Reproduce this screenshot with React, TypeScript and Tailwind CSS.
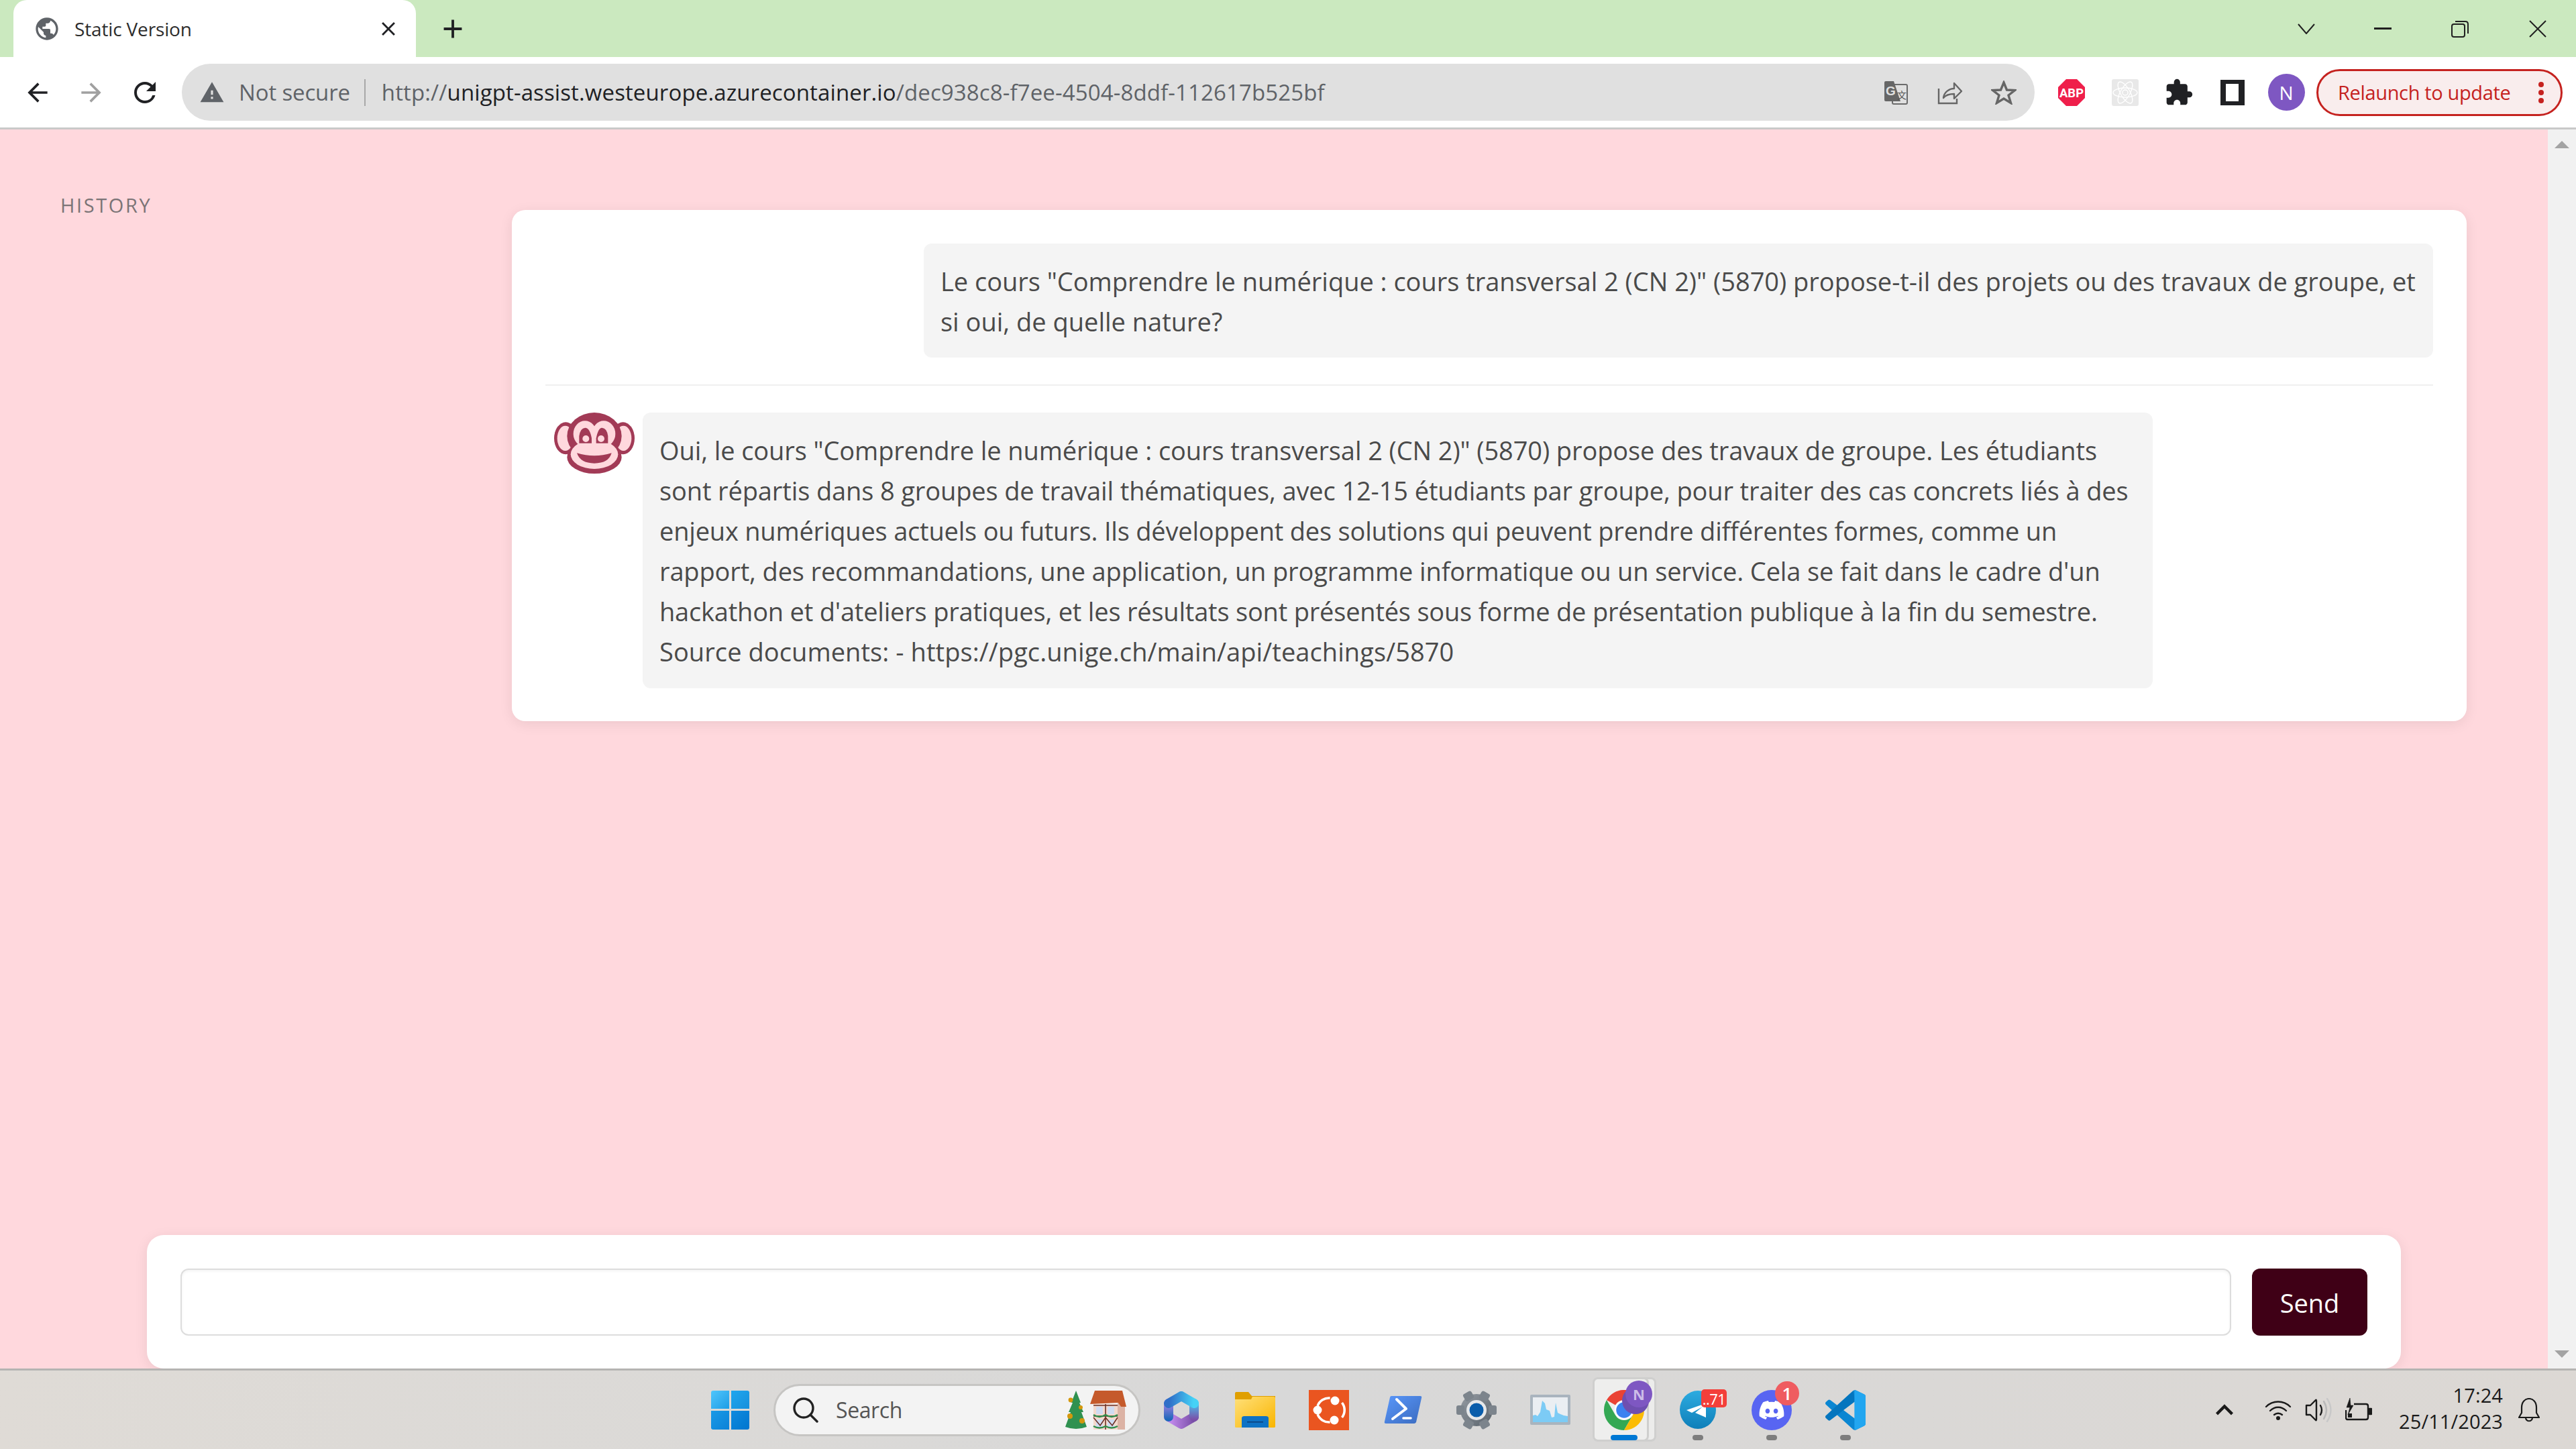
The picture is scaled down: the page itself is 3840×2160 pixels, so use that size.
import React from "react";
import { MdArrowBack, MdArrowForward, MdRefresh, MdWarning, MdPublic, MdExtension, MdClose, MdAdd, MdKeyboardArrowUp } from "react-icons/md";
import { FaDiscord } from "react-icons/fa";

const Monkey = () => (
  <svg viewBox="48 45 360 273" className="w-[120px] h-[91px] shrink-0 ml-[13px] mr-[12px]">
    <ellipse cx="100" cy="160" rx="52" ry="72" fill="#a23a56" />
    <ellipse cx="356" cy="160" rx="52" ry="72" fill="#a23a56" />
    <ellipse cx="98" cy="160" rx="36" ry="56" fill="#ffd8dd" />
    <ellipse cx="358" cy="160" rx="36" ry="56" fill="#ffd8dd" />
    <ellipse cx="228" cy="150" rx="122" ry="105" fill="#a23a56" />
    <ellipse cx="228" cy="245" rx="122" ry="73" fill="#a23a56" />
    <ellipse cx="186" cy="140" rx="52" ry="58" fill="#ffd8dd" />
    <ellipse cx="270" cy="140" rx="52" ry="58" fill="#ffd8dd" />
    <ellipse cx="228" cy="232" rx="106" ry="65" fill="#ffd8dd" />
    <path d="M160 182 V150 Q165 114 187 113 Q208 114 216 160 V182 Z" fill="#a23a56" />
    <path d="M236 182 V160 Q245 114 262 113 Q284 114 289 150 V182 Z" fill="#a23a56" />
    <circle cx="190" cy="162" r="15" fill="#ffd8dd" />
    <circle cx="258" cy="162" r="15" fill="#ffd8dd" />
    <path d="M150 226 Q228 250 305 226 Q292 272 228 272 Q165 272 150 226Z" fill="#a23a56" />
  </svg>
);

const Translate = () => (
  <svg viewBox="0 0 36 36" className="w-[36px] h-[36px]">
    <rect x="12" y="6" width="22" height="29" rx="2" fill="none" stroke="#6b6b6b" strokeWidth="2" />
    <path d="M2 1 H14 L24 31 H2 Q0 31 0 29 V3 Q0 1 2 1Z" fill="#666" />
    <text x="2" y="22" fontSize="19" fontWeight="700" fill="#e0e0e0" fontFamily="'Liberation Sans',sans-serif">G</text>
    <text x="19" y="27" fontSize="14" fill="#555" fontFamily="'Noto Sans CJK SC',sans-serif">文</text>
  </svg>
);

const Share = () => (
  <svg viewBox="0 0 38 36" className="w-[38px] h-[36px]" fill="none" stroke="#666" strokeWidth="2.4">
    <path d="M2 12 V34 H29 V27" />
    <path d="M9 26 C10 17 18 12 25 12 V4 L36 16 L25 27 V20 C18 20 13 21 9 26 Z" strokeLinejoin="round" />
  </svg>
);

const Star = () => (
  <svg viewBox="0 0 38 36" className="w-[38px] h-[36px]" fill="none" stroke="#666" strokeWidth="3.4" strokeLinejoin="miter">
    <path d="M19 3 L23.5 14 L35.5 14.5 L26 22 L29.5 33.5 L19 27 L8.5 33.5 L12 22 L2.5 14.5 L14.5 14 Z" />
  </svg>
);

const Abp = () => (
  <svg viewBox="0 0 40 40" className="w-[40px] h-[40px]">
    <polygon points="12,0 28,0 40,12 40,28 28,40 12,40 0,28 0,12" fill="#ef1f4b" />
    <text x="20" y="27" textAnchor="middle" fontSize="19" fontWeight="700" fill="#fff" fontFamily="'Roboto',sans-serif" textLength="36" lengthAdjust="spacingAndGlyphs">ABP</text>
  </svg>
);

const Atom = () => (
  <svg viewBox="0 0 40 40" className="w-[40px] h-[40px] rounded-[3px] bg-[#e8e8e8]" fill="none" stroke="#fff" strokeWidth="1.4">
    <ellipse cx="20" cy="20" rx="18" ry="7" />
    <ellipse cx="20" cy="20" rx="18" ry="7" transform="rotate(60 20 20)" />
    <ellipse cx="20" cy="20" rx="18" ry="7" transform="rotate(120 20 20)" />
    <circle cx="20" cy="20" r="4" />
  </svg>
);

const Folder = () => (
  <svg viewBox="0 0 60 54" className="w-[60px] h-[54px]">
    <defs>
      <linearGradient id="fo" x1="0" y1="0" x2="1" y2="1"><stop offset="0" stopColor="#ffe07a" /><stop offset="1" stopColor="#f9b500" /></linearGradient>
    </defs>
    <path d="M2 0 H20 L25 6 H60 V12 H0 V2 Q0 0 2 0Z" fill="#e09f00" />
    <path d="M0 11 L24 11 L26 7 H58 Q60 7 60 9 V52 Q60 53 58 53 H2 Q0 53 0 52Z" fill="url(#fo)" />
    <path d="M10 53 V39 Q10 36 14 36 H46 Q50 36 50 39 V53Z" fill="#0e72c4" />
    <rect x="18" y="44" width="24" height="1.5" fill="#0a3e78" />
  </svg>
);

const Ubuntu = () => (
  <svg viewBox="0 0 60 60" className="w-[60px] h-[60px]">
    <rect width="60" height="60" fill="#ea5520" />
    <g fill="none" stroke="#fff" strokeWidth="3.6">
      <path d="M13.1 23.8 A18 18 0 0 1 31.6 12.1" />
      <path d="M49.5 19 A18 18 0 0 1 49.5 41" />
      <path d="M31.6 47.9 A18 18 0 0 1 13.1 36.2" />
    </g>
    <circle cx="39" cy="16" r="6.5" fill="#fff" />
    <circle cx="13" cy="30" r="6.5" fill="#fff" />
    <circle cx="38" cy="45" r="6.5" fill="#fff" />
  </svg>
);

const PowerShell = () => (
  <svg viewBox="0 0 57 43" className="w-[57px] h-[43px]">
    <defs>
      <linearGradient id="ps" x1="0" y1="0" x2="1" y2="1"><stop offset="0" stopColor="#5a97fa" /><stop offset="1" stopColor="#3b6cc0" /></linearGradient>
    </defs>
    <path d="M11 1 H54 Q57 1 56 4 L48 40 Q47 42 45 42 H3 Q0 42 1 39 L9 3 Q9.5 1 11 1Z" fill="url(#ps)" />
    <path d="M19 6 L33 20 L13 35" fill="none" stroke="#fff" strokeWidth="4" strokeLinecap="round" strokeLinejoin="round" />
    <path d="M29 34 H40" stroke="#fff" strokeWidth="3.6" strokeLinecap="round" />
  </svg>
);

const Gear = () => (
  <svg viewBox="0 0 60 60" className="w-[60px] h-[60px]">
    <defs>
      <linearGradient id="ge" x1="0" y1="0" x2="1" y2="1"><stop offset="0" stopColor="#969ca3" /><stop offset="1" stopColor="#59626b" /></linearGradient>
    </defs>
    <g fill="url(#ge)">
      <circle cx="30" cy="30" r="24" />
    </g>
    <g fill="#7c848c">
      {[0, 60, 120, 180, 240, 300].map((a) => (
        <rect key={a} x="23" y="0" width="14" height="12" rx="3" transform={`rotate(${a + 30} 30 30)`} />
      ))}
    </g>
    <circle cx="30" cy="30" r="15" fill="#e6e8ea" />
    <circle cx="30" cy="30" r="10.5" fill="#0a5dab" />
  </svg>
);

const Monitor = () => (
  <svg viewBox="0 0 60 45" className="w-[60px] h-[45px]">
    <rect width="60" height="45" rx="2" fill="#a9b4be" />
    <rect x="4" y="4" width="52" height="37" fill="#eaeef2" />
    <path d="M4 31 L8 30 L11 32 L15 26 L18 9 L22 13 L24 22 L29 24 L32 34 L36 33 L38 12 L41 27 L45 29 L50 31 L56 32 V41 H4Z" fill="#7ccbf5" />
  </svg>
);

const Copilot = () => (
  <svg viewBox="0 0 52 56" className="w-[52px] h-[56px]" fill="none" strokeWidth="14" strokeLinecap="round" strokeLinejoin="round">
    <defs>
      <linearGradient id="c1" gradientUnits="userSpaceOnUse" x1="8" y1="16" x2="44" y2="18"><stop offset="0" stopColor="#2f6fc8" /><stop offset="1" stopColor="#45d2f6" /></linearGradient>
      <linearGradient id="c2" gradientUnits="userSpaceOnUse" x1="8" y1="44" x2="44" y2="44"><stop offset="0" stopColor="#c58cf0" /><stop offset="1" stopColor="#7a4fa8" /></linearGradient>
      <linearGradient id="c3" gradientUnits="userSpaceOnUse" x1="8" y1="14" x2="8" y2="42"><stop offset="0" stopColor="#b284e8" /><stop offset="1" stopColor="#1c68ba" /></linearGradient>
      <linearGradient id="c4" gradientUnits="userSpaceOnUse" x1="44" y1="14" x2="44" y2="42"><stop offset="0" stopColor="#45d2f6" /><stop offset="1" stopColor="#7a4fa8" /></linearGradient>
    </defs>
    <path d="M7 38 L26 49 L45 38" stroke="url(#c2)" />
    <path d="M45 18 V38" stroke="url(#c4)" />
    <path d="M7 18 V38" stroke="url(#c3)" />
    <path d="M7 18 L26 7 L45 18" stroke="url(#c1)" />
  </svg>
);

const Chrome = () => (
  <svg viewBox="0 0 48 48" className="w-[60px] h-[60px]">
    <path d="M3.2 12 A24 24 0 0 1 44.8 12 L24 12 A12 12 0 0 0 13.6 18 Z" fill="#ea4335" />
    <path d="M3.2 12 A24 24 0 0 0 24 48 L34.4 30 A12 12 0 0 1 13.6 30 Z" fill="#34a853" />
    <path d="M44.8 12 A24 24 0 0 1 24 48 L34.4 30 A12 12 0 0 0 34.4 18 L24 12 Z" fill="#fbbc04" />
    <circle cx="24" cy="24" r="11.5" fill="#fff" />
    <circle cx="24" cy="24" r="9.4" fill="#3b82f0" />
  </svg>
);

const Telegram = () => (
  <svg viewBox="0 0 54 57" className="w-[54px] h-[57px]">
    <defs>
      <linearGradient id="tg" x1="0" y1="0" x2="0" y2="1"><stop offset="0" stopColor="#2cabe0" /><stop offset="1" stopColor="#0f7fb9" /></linearGradient>
    </defs>
    <ellipse cx="27" cy="28.5" rx="27" ry="28.5" fill="url(#tg)" />
    <path d="M10 29 L39 19 L39 40 L23 33 L34 24 L18 33 Z" fill="#fff" />
  </svg>
);

const VSCode = () => (
  <svg viewBox="0 0 100 100" className="w-[60px] h-[60px]">
    <defs>
      <clipPath id="vsr"><rect x="72" y="0" width="28" height="100" /></clipPath>
    </defs>
    <path id="vsp" d="M96.5 10.8 75.9 0.9c-2.4-1.2-5.2-.7-7.1 1.2L29.4 38 12.2 25c-1.6-1.2-3.8-1.1-5.3.2l-5.5 5c-1.8 1.6-1.8 4.5 0 6.1L16.3 50 1.4 63.6c-1.8 1.6-1.8 4.5 0 6.1l5.5 5c1.5 1.3 3.7 1.4 5.3.2l17.2-13 39.4 35.9c1.9 1.9 4.7 2.4 7.1 1.2l20.6-9.9c2.2-1 3.5-3.2 3.5-5.6V16.4c0-2.4-1.3-4.6-3.5-5.6zM75 72.7 45.1 50 75 27.3v45.4z" fill="#0a86d2" />
    <path d="M29.4 62 12.2 75c-1.6 1.2-3.8 1.1-5.3-.2l-5.5-5c-1.8-1.6-1.8-4.5 0-6.1L16.3 50 29.4 38 68.8 2.1 75 27.3 45.1 50z" fill="#0068ad" opacity="0.55" />
    <g clipPath="url(#vsr)">
      <path d="M96.5 10.8 75.9 0.9 72 2 72 98 75.9 99.1 96.5 89.2c2.2-1 3.5-3.2 3.5-5.6V16.4c0-2.4-1.3-4.6-3.5-5.6z" fill="#22a6f0" />
    </g>
  </svg>
);

const Tree = () => (
  <svg viewBox="0 0 34 58" className="w-[34px] h-[58px]">
    <path d="M17 0 L24 18 L22 18 L28 32 L25 32 L33 54 Q17 60 1 54 L9 32 L6 32 L12 18 L10 18Z" fill="#2f9150" />
    <circle cx="9" cy="14" r="3.4" fill="#d4980c" />
    <circle cx="24" cy="25" r="3" fill="#d4980c" />
    <circle cx="8" cy="38" r="4" fill="#d4980c" />
    <circle cx="26" cy="45" r="4" fill="#d4980c" />
  </svg>
);

const House = () => (
  <svg viewBox="0 0 54 58" className="w-[54px] h-[58px]">
    <rect x="5" y="20" width="36" height="38" fill="#f3d9cd" />
    <path d="M41 12 L52 24 V58 H41Z" fill="#dcb3a5" />
    <path d="M7 0 H48 L54 24 H46 L42 18 L0 20Z" fill="#c55a2b" />
    <g fill="#cfdcf2"><rect x="9" y="24" width="10" height="11" /><rect x="26" y="24" width="10" height="11" /><rect x="9" y="43" width="10" height="11" /><rect x="26" y="43" width="10" height="11" /></g>
    <g stroke="#6b3027" strokeWidth="1.6" fill="none"><path d="M5 22 H41 M5 38 H41 M23 20 V58 M5 40 L15 52 L23 40 L33 52 L41 40" /></g>
    <g stroke="#2f8f4e" strokeWidth="2.4" fill="none"><path d="M5 36 Q14 42 23 36 Q32 42 41 36" /><path d="M5 53 Q14 58 23 53 Q32 58 41 53" /></g>
  </svg>
);

const Wifi = () => (
  <svg viewBox="0 0 40 32" className="w-[40px] h-[32px]" fill="none" stroke="#1a1a1a" strokeWidth="2.4" strokeLinecap="round">
    <path d="M2 11 C12 1 28 1 38 11" />
    <path d="M8 17 C15 10 25 10 32 17" />
    <path d="M14 23 C17.5 20 22.5 20 26 23" />
    <circle cx="20" cy="28" r="3" fill="#1a1a1a" stroke="none" />
  </svg>
);

const Speaker = () => (
  <svg viewBox="0 0 42 36" className="w-[42px] h-[36px]" fill="none" strokeWidth="2.4" strokeLinejoin="round" strokeLinecap="round">
    <path d="M2 11 H8 L16 3 Q17 2 17 5 V31 Q17 34 16 33 L8 25 H2Z" stroke="#1a1a1a" />
    <path d="M23 11 Q27 18 23 25" stroke="#1a1a1a" />
    <path d="M28 5 Q36 18 28 31" stroke="#b9b9b9" />
    <path d="M33 1 Q44 18 33 35" stroke="#c8c8c8" />
  </svg>
);

const Battery = () => (
  <svg viewBox="0 0 40 36" className="w-[40px] h-[36px]" fill="none" stroke="#1a1a1a" strokeWidth="2.4" strokeLinejoin="round">
    <path d="M13 9 H31 Q34 9 34 12 V29 Q34 32 31 32 H4 Q1 32 1 29 V18" />
    <rect x="36" y="16" width="3" height="8" fill="#1a1a1a" />
    <path d="M7 0 L2 14 H7 L4 25 L12 11 H8Z" fill="#1a1a1a" strokeWidth="0.6" />
    <rect x="4" y="23" width="6" height="6" fill="#1a1a1a" stroke="none" />
  </svg>
);

const Bell = () => (
  <svg viewBox="0 0 32 36" className="w-[32px] h-[36px]" fill="none" stroke="#1a1a1a" strokeWidth="2.2" strokeLinejoin="round">
    <path d="M5 14 C5 6 10 1 16 1 C22 1 27 6 27 14 V22 L31 29 H1 L5 22Z" />
    <path d="M11 29 C11 36 21 36 21 29" />
  </svg>
);

const Cell = ({ children, dot }: { children: React.ReactNode; dot?: boolean }) => (
  <div className="relative w-[110px] h-full shrink-0 flex items-center justify-center">
    {children}
    {dot && <div className="absolute bottom-[13px] left-[47px] w-[16px] h-[8px] rounded-full bg-[#7d7d7d]" />}
  </div>
);

const ToolCell = ({ children }: { children: React.ReactNode }) => (
  <div className="w-[80px] h-full shrink-0 flex items-center justify-center">{children}</div>
);

export default function App() {
  return (
    <div className="w-[3840px] h-[2160px] flex flex-col overflow-hidden bg-white font-['Open_Sans','Noto_Sans',sans-serif]">
      {/* tab strip */}
      <div className="h-[85px] shrink-0 bg-[#cbe9bf] flex items-stretch">
        <div className="ml-[20px] w-[600px] bg-white rounded-t-[20px] flex items-center pl-[30px] pr-[24px]">
          <MdPublic className="w-[40px] h-[40px] text-[#5f6368] shrink-0" />
          <span className="ml-[21px] text-[28px] text-[#2d2d2d] tracking-[-0.15px] flex-1">Static Version</span>
          <MdClose className="w-[34px] h-[34px] text-[#202124]" />
        </div>
        <div className="ml-[32px] flex items-center">
          <MdAdd className="w-[46px] h-[46px] text-[#202124]" />
        </div>
        <div className="ml-auto flex items-center text-[#1a1a1a]">
          <svg viewBox="0 0 26 16" className="w-[26px] h-[16px] mr-[88px]" fill="none" stroke="#202020" strokeWidth="2"><path d="M1 1 L13 15 L25 1" /></svg>
          <div className="w-[26px] h-[3px] bg-[#202020] mr-[89px]" />
          <svg viewBox="0 0 26 26" className="w-[26px] h-[26px] mr-[90px]" fill="none" stroke="#202020" strokeWidth="2"><rect x="1" y="6" width="19" height="19" rx="3" /><path d="M6 2 H21 Q25 2 25 6 V20" /></svg>
          <svg viewBox="0 0 26 26" className="w-[26px] h-[26px] mr-[44px]" fill="none" stroke="#202020" strokeWidth="2"><path d="M1 1 L25 25 M25 1 L1 25" /></svg>
        </div>
      </div>

      {/* toolbar */}
      <div className="h-[105px] shrink-0 bg-white flex items-center pl-[16px] pr-[18px]">
        <div className="flex h-[85px] items-center">
          <ToolCell><MdArrowBack className="w-[44px] h-[44px] text-[#202124]" /></ToolCell>
          <ToolCell><MdArrowForward className="w-[44px] h-[44px] text-[#a0a0a0]" /></ToolCell>
          <ToolCell><MdRefresh className="w-[48px] h-[48px] text-[#202124]" /></ToolCell>
        </div>
        <div className="ml-[15px] w-[2762px] h-[85px] rounded-full bg-[#e0e0e0] flex items-center pl-[26px] pr-[6px] shrink-0">
          <MdWarning className="w-[38px] h-[38px] text-[#5f6368] shrink-0" />
          <span className="ml-[21px] text-[33px] text-[#5f6368] whitespace-nowrap tracking-[-0.15px]">Not secure</span>
          <div className="ml-[21px] w-[2px] h-[40px] bg-[#a8a8a8]" />
          <span className="ml-[24px] text-[33px] text-[#5f6368] whitespace-nowrap tracking-[0.12px]">
            http://<span className="text-[#202124]">unigpt-assist.westeurope.azurecontainer.io</span>/dec938c8-f7ee-4504-8ddf-112617b525bf
          </span>
          <div className="ml-auto flex h-full">
            <ToolCell><Translate /></ToolCell>
            <ToolCell><Share /></ToolCell>
            <ToolCell><Star /></ToolCell>
          </div>
        </div>
        <div className="ml-[15px] flex h-[85px] items-center">
          <ToolCell><Abp /></ToolCell>
          <ToolCell><Atom /></ToolCell>
          <ToolCell><MdExtension className="w-[44px] h-[44px] text-[#202124]" /></ToolCell>
          <ToolCell><div className="w-[36px] h-[38px] border-[9px] border-[#202124] border-l-[8px] border-y-[6px]" /></ToolCell>
          <ToolCell>
            <div className="w-[55px] h-[55px] rounded-full bg-[#7e57c2] flex items-center justify-center text-white text-[28px]">N</div>
          </ToolCell>
        </div>
        <div className="ml-[5px] w-[367px] h-[70px] rounded-full border-[3px] border-[#c5221f] bg-[#f9eded] flex items-center pl-[29px] pr-[25px] text-[#c5221f] shrink-0">
          <span className="text-[29px] tracking-[-0.35px] whitespace-nowrap">Relaunch to update</span>
          <svg viewBox="0 0 8 32" className="ml-auto w-[8px] h-[32px]" fill="#c5221f"><circle cx="4" cy="4" r="4" /><circle cx="4" cy="16" r="4" /><circle cx="4" cy="28" r="4" /></svg>
        </div>
      </div>
      <div className="h-[3px] shrink-0 bg-[#c9c9c9]" />

      {/* browser content */}
      <div className="flex-1 flex min-h-0">
        <div className="flex-1 min-w-0 bg-[#ffd8dd] flex flex-col overflow-hidden">
          <div className="flex-1 flex items-start min-h-0">
            <div className="w-[763px] shrink-0 pl-[90px] pt-[93px] text-[29px] leading-[40px] tracking-[2.6px] text-[#7b7476]">HISTORY</div>
            <div className="mt-[120px] w-[2914px] bg-white rounded-[20px] shadow-[0_4px_20px_rgba(0,0,0,0.08)] pt-[50px] px-[50px] pb-[49px] text-[38px] leading-[60px] text-[#4a4a4a]">
              <div className="flex justify-end">
                <div className="w-[2250px] bg-[#f4f4f4] rounded-[12px] pt-[26px] pb-[24px] px-[25px]">
                  <div className="whitespace-nowrap tracking-[-0.02px]">Le cours "Comprendre le numérique : cours transversal 2 (CN 2)" (5870) propose-t-il des projets ou des travaux de groupe, et</div>
                  <div className="whitespace-nowrap">si oui, de quelle nature?</div>
                </div>
              </div>
              <div className="my-[40px] h-[2px] bg-[#f0f0f0]" />
              <div className="flex items-start">
                <Monkey />
                <div className="w-[2251px] bg-[#f4f4f4] rounded-[12px] pt-[26px] pb-[25px] px-[25px]">
                  <div className="whitespace-nowrap tracking-[-0.1px]">Oui, le cours "Comprendre le numérique : cours transversal 2 (CN 2)" (5870) propose des travaux de groupe. Les étudiants</div>
                  <div className="whitespace-nowrap tracking-[-0.12px]">sont répartis dans 8 groupes de travail thématiques, avec 12-15 étudiants par groupe, pour traiter des cas concrets liés à des</div>
                  <div className="whitespace-nowrap tracking-[-0.2px]">enjeux numériques actuels ou futurs. Ils développent des solutions qui peuvent prendre différentes formes, comme un</div>
                  <div className="whitespace-nowrap tracking-[-0.14px]">rapport, des recommandations, une application, un programme informatique ou un service. Cela se fait dans le cadre d'un</div>
                  <div className="whitespace-nowrap tracking-[-0.2px]">hackathon et d'ateliers pratiques, et les résultats sont présentés sous forme de présentation publique à la fin du semestre.</div>
                  <div className="whitespace-nowrap tracking-[0.08px]">Source documents: - https://pgc.unige.ch/main/api/teachings/5870</div>
                </div>
              </div>
            </div>
          </div>
          <div className="ml-[219px] w-[3360px] h-[199px] shrink-0 bg-white rounded-[25px] shadow-[0_4px_20px_rgba(0,0,0,0.08)] p-[50px] flex">
            <input className="flex-1 min-w-0 h-[100px] border-[2px] border-[#dddddd] rounded-[12px] bg-white shadow-[inset_0_2px_4px_rgba(0,0,0,0.05)] outline-none" />
            <button className="ml-[31px] w-[172px] h-[100px] pt-[2px] rounded-[12px] bg-[#3f0016] text-white text-[38px] shrink-0">Send</button>
          </div>
        </div>
        <div className="w-[42px] shrink-0 bg-[#f1f1f1] flex flex-col items-center justify-between pt-[17px] pb-[16px]">
          <div className="w-0 h-0 border-x-[11px] border-x-transparent border-b-[11px] border-b-[#a3a3a3]" />
          <div className="w-0 h-0 border-x-[11px] border-x-transparent border-t-[11px] border-t-[#a3a3a3]" />
        </div>
      </div>

      {/* taskbar */}
      <div className="h-[120px] shrink-0 border-t-[3px] border-t-[#b5b4b2] bg-gradient-to-r from-[#dfdbd6] via-[#d8d8d8] to-[#dcd8d4] flex items-center">
        <div className="ml-[1033px] flex h-full items-center">
          <Cell>
            <div className="grid grid-cols-2 gap-[3px] w-[57px] h-[58px]">
              <div className="bg-gradient-to-br from-[#4fc6fc] to-[#1b9de6] rounded-tl-[3px]" />
              <div className="bg-gradient-to-br from-[#1fa6ee] to-[#1690dc] rounded-tr-[3px]" />
              <div className="bg-gradient-to-br from-[#1a9ae6] to-[#0b82d8] rounded-bl-[3px]" />
              <div className="bg-gradient-to-br from-[#0f8ade] to-[#0076cf] rounded-br-[3px]" />
            </div>
          </Cell>
          <div className="ml-[10px] w-[547px] h-[78px] rounded-full bg-[#f3f3f3] border-[3px] border-[#c6c5c3] flex items-center pl-[26px] pr-[18px]">
            <svg viewBox="0 0 38 38" className="w-[38px] h-[38px] shrink-0" fill="none" stroke="#222" strokeWidth="3.4" strokeLinecap="round"><circle cx="16" cy="16" r="14" /><path d="M26 26 L36 36" /></svg>
            <span className="ml-[26px] text-[32px] text-[#555] tracking-[-0.4px]">Search</span>
            <div className="ml-auto flex items-end gap-[4px]">
              <Tree />
              <House />
            </div>
          </div>
          <div className="ml-[6px] flex h-full items-center">
            <Cell><Copilot /></Cell>
            <Cell><Folder /></Cell>
            <Cell><Ubuntu /></Cell>
            <Cell><PowerShell /></Cell>
            <Cell><Gear /></Cell>
            <Cell><Monitor /></Cell>
            <Cell>
              <div className="absolute left-[20px] top-[10px] w-[83px] h-[96px] rounded-[8px] bg-[#ececeb] border-[3px] border-[#cfcfce]" />
              <div className="absolute left-[8px] top-[10px] w-[84px] h-[96px] rounded-[8px] bg-[#eeeeed] border-[3px] border-[#cfcfce]" />
              <div className="relative"><Chrome /></div>
              <div className="absolute left-[35px] bottom-[13px] w-[40px] h-[8px] rounded-full bg-[#0078d4]" />
              <div className="absolute left-[52px] top-[25px] w-[40px] h-[40px] rounded-full bg-[#6f4fb0]" />
              <div className="absolute left-[57px] top-[15px] w-[40px] h-[40px] rounded-full bg-[#7e57c2] flex items-center justify-center text-[22px] font-bold text-[#cdbde8]">N</div>
            </Cell>
            <Cell dot>
              <Telegram />
              <div className="absolute left-[60px] top-[28px] w-[38px] h-[27px] rounded-[5px] bg-[#f33f3a] flex items-center justify-center text-white text-[22px] leading-none tracking-[-0.5px] whitespace-nowrap">..71</div>
            </Cell>
            <Cell dot>
              <div className="w-[60px] h-[60px] rounded-full bg-[#5865f2] flex items-center justify-center"><FaDiscord className="w-[40px] h-[40px] text-white" /></div>
              <div className="absolute left-[60px] top-[16px] w-[36px] h-[36px] rounded-full bg-[#ef5c60] flex items-center justify-center text-white text-[26px] font-semibold">1</div>
            </Cell>
            <Cell dot><VSCode /></Cell>
          </div>
        </div>
        <div className="ml-auto flex items-center">
          <MdKeyboardArrowUp className="w-[52px] h-[52px] text-[#1a1a1a] mr-[34px]" />
          <Wifi />
          <div className="ml-[20px]"><Speaker /></div>
          <div className="ml-[18px]"><Battery /></div>
          <div className="ml-[34px] w-[161px] pb-[5px] text-right text-[#1a1a1a] text-[29px] leading-[39px] tracking-[0.1px] whitespace-nowrap">
            <div>17:24</div>
            <div>25/11/2023</div>
          </div>
          <div className="ml-[23px] mr-[54px]"><Bell /></div>
        </div>
      </div>
    </div>
  );
}
